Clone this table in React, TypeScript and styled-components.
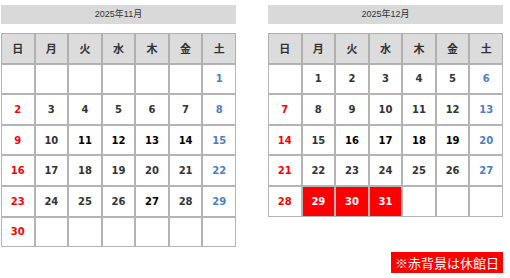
import React from "react";
import styled, { createGlobalStyle } from "styled-components";

const GlobalStyle = createGlobalStyle`
  body {
    margin: 0;
    background: #fff;
    font-family: "DejaVu Sans", "Noto Sans CJK JP", sans-serif;
  }
`;

const Page = styled.div`
  width: 502px;
  padding: 5px 0 0 1px;
  display: flex;
  flex-direction: column;
`;

const Months = styled.div`
  display: flex;
  align-items: flex-start;
  gap: 32px;
`;

const Month = styled.section`
  width: 235px;
`;

const Title = styled.div`
  height: 19px;
  line-height: 19px;
  margin-bottom: 9px;
  background: #d9d9d9;
  color: #333;
  text-align: center;
  font-family: "Liberation Sans", "Noto Sans CJK JP", sans-serif;
  font-size: 9px;
`;

const Table = styled.table`
  width: 235px;
  table-layout: fixed;
  border-collapse: separate;
  border-spacing: 0;
`;

const HeadCell = styled.th`
  height: 28.7px;
  padding: 0;
  background: #dcdcdc;
  border: 1px solid #b0b0b0;
  color: #333;
  font-family: "Noto Sans CJK JP", sans-serif;
  font-size: 11px;
  font-weight: 700;
`;

const toneColor = {
  sun: "#ff0000",
  sat: "#4a7fc4",
  plain: "#333",
  strong: "#000",
};

type Tone = keyof typeof toneColor;

const DayCell = styled.td<{ $tone: Tone; $closed?: boolean }>`
  height: 28.6px;
  padding: 0;
  border: 1px solid #b4b4b4;
  background: ${(p) => (p.$closed ? "#ff0000" : "#fff")};
  color: ${(p) => (p.$closed ? "#fff" : toneColor[p.$tone])};
  text-align: center;
  font-size: 10px;
  font-weight: 700;
`;

const NoteRow = styled.div`
  display: flex;
  justify-content: flex-end;
  margin-top: 5px;
`;

const Note = styled.div`
  height: 21px;
  line-height: 21px;
  padding: 0 4px;
  background: #ff0000;
  color: #fff;
  font-family: "Noto Sans CJK JP", sans-serif;
  font-size: 13px;
`;

const WEEK = ["日", "月", "火", "水", "木", "金", "土"];

interface MonthData {
  title: string;
  offset: number;
  days: number;
  strong: number[];
  closed: number[];
}

const months: MonthData[] = [
  { title: "2025年11月", offset: 6, days: 30, strong: [11, 12, 13, 14, 27], closed: [] },
  { title: "2025年12月", offset: 1, days: 31, strong: [16, 17, 18, 19], closed: [29, 30, 31] },
];

const Calendar = ({ m }: { m: MonthData }) => {
  const cells: (number | null)[] = [];
  for (let i = 0; i < m.offset; i++) cells.push(null);
  for (let d = 1; d <= m.days; d++) cells.push(d);
  while (cells.length % 7) cells.push(null);
  const weeks: (number | null)[][] = [];
  for (let i = 0; i < cells.length; i += 7) weeks.push(cells.slice(i, i + 7));

  return (
    <Month>
      <Title>{m.title}</Title>
      <Table>
        <thead>
          <tr>
            {WEEK.map((w) => (
              <HeadCell key={w}>{w}</HeadCell>
            ))}
          </tr>
        </thead>
        <tbody>
          {weeks.map((wk, wi) => (
            <tr key={wi}>
              {wk.map((d, di) => {
                let tone: Tone = "plain";
                if (di === 0) tone = "sun";
                else if (di === 6) tone = "sat";
                else if (d && m.strong.includes(d)) tone = "strong";
                return (
                  <DayCell key={di} $tone={tone} $closed={!!d && m.closed.includes(d)}>
                    {d ?? ""}
                  </DayCell>
                );
              })}
            </tr>
          ))}
        </tbody>
      </Table>
    </Month>
  );
};

export default function App() {
  return (
    <>
      <GlobalStyle />
      <Page>
        <Months>
          {months.map((m) => (
            <Calendar key={m.title} m={m} />
          ))}
        </Months>
        <NoteRow>
          <Note>※赤背景は休館日</Note>
        </NoteRow>
      </Page>
    </>
  );
}
